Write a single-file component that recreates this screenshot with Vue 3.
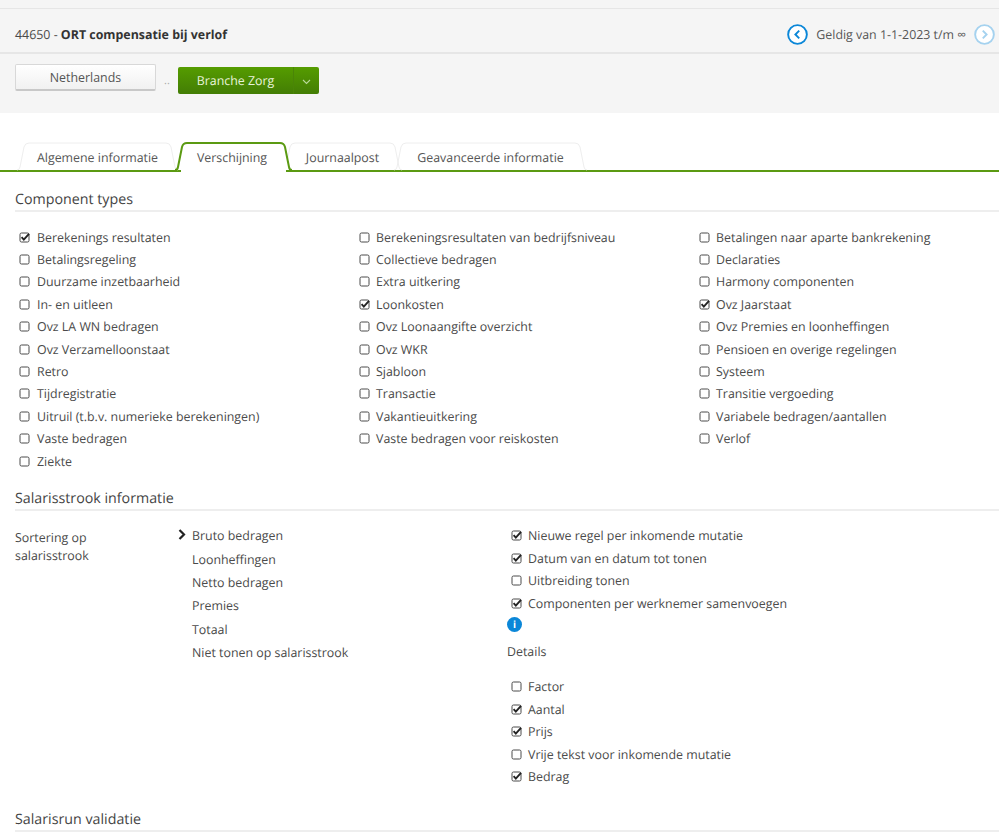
<script setup>
const tabs = [
  { label: 'Algemene informatie', width: 161, active: false, cls: 't1' },
  { label: 'Verschijning', width: 117, active: true, cls: 't2' },
  { label: 'Journaalpost', width: 119, active: false, cls: 't3' },
  { label: 'Geavanceerde informatie', width: 193, active: false, cls: 't4' }
]
function tabPath(w) {
  return `M0 27 Q2.5 27 3 24 L7 4 Q8 0 12 0 L${w - 12} 0 Q${w - 8} 0 ${w - 7} 4 L${w - 3} 24 Q${w - 2.5} 27 ${w} 27`
}
const types = [
  ['Berekenings resultaten', 1], ['Berekeningsresultaten van bedrijfsniveau', 0], ['Betalingen naar aparte bankrekening', 0],
  ['Betalingsregeling', 0], ['Collectieve bedragen', 0], ['Declaraties', 0],
  ['Duurzame inzetbaarheid', 0], ['Extra uitkering', 0], ['Harmony componenten', 0],
  ['In- en uitleen', 0], ['Loonkosten', 1], ['Ovz Jaarstaat', 1],
  ['Ovz LA WN bedragen', 0], ['Ovz Loonaangifte overzicht', 0], ['Ovz Premies en loonheffingen', 0],
  ['Ovz Verzamelloonstaat', 0], ['Ovz WKR', 0], ['Pensioen en overige regelingen', 0],
  ['Retro', 0], ['Sjabloon', 0], ['Systeem', 0],
  ['Tijdregistratie', 0], ['Transactie', 0], ['Transitie vergoeding', 0],
  ['Uitruil (t.b.v. numerieke berekeningen)', 0], ['Vakantieuitkering', 0], ['Variabele bedragen/aantallen', 0],
  ['Vaste bedragen', 0], ['Vaste bedragen voor reiskosten', 0], ['Verlof', 0],
  ['Ziekte', 0]
]
const sort = ['Bruto bedragen', 'Loonheffingen', 'Netto bedragen', 'Premies', 'Totaal', 'Niet tonen op salarisstrook']
const opts = [['Nieuwe regel per inkomende mutatie', 1], ['Datum van en datum tot tonen', 1], ['Uitbreiding tonen', 0], ['Componenten per werknemer samenvoegen', 1]]
const details = [['Factor', 0], ['Aantal', 1], ['Prijs', 1], ['Vrije tekst voor inkomende mutatie', 0], ['Bedrag', 1]]
</script>

<template>
  <div class="page">
    <header class="head">
      <div class="titlebar">
        <div class="title">44650 - <b>ORT compensatie bij verlof</b></div>
        <div class="valid">
          <svg class="nav" viewBox="0 0 22 22"><circle cx="11" cy="11" r="9.8" fill="#fff" stroke="#0b87d8" stroke-width="2"/><path d="M12.8 7 L8.8 11 L12.8 15" fill="none" stroke="#0b87d8" stroke-width="2"/></svg>
          <span>Geldig van 1-1-2023 t/m ∞</span>
          <svg class="nav" viewBox="0 0 22 22"><circle cx="11" cy="11" r="9.8" fill="#fff" stroke="#a5d2ef" stroke-width="2"/><path d="M9.2 7 L13.2 11 L9.2 15" fill="none" stroke="#a5d2ef" stroke-width="2"/></svg>
        </div>
      </div>
      <div class="btns">
        <button class="btn-white">Netherlands</button>
        <span class="dots">..</span>
        <div class="btn-green"><span class="gmain">Branche Zorg</span><span class="garrow"><svg width="9" height="6" viewBox="0 0 9 6"><path d="M1 1 L4.5 4.5 L8 1" fill="none" stroke="#b9d99a" stroke-width="1.1"/></svg></span></div>
      </div>
    </header>

    <nav class="tabs">
      <div v-for="t in tabs" :key="t.label" class="tab" :class="[t.cls, { active: t.active }]" :style="{ width: t.width + 'px' }">
        <svg class="tabshape" :width="t.width" height="30" :viewBox="`0 0 ${t.width} 30`">
          <rect v-if="t.active" x="6" y="24" :width="t.width - 12" height="6" fill="#fff"/>
          <path :d="tabPath(t.width)" :fill="t.active ? '#fff' : 'none'" :stroke="t.active ? '#5b9a12' : '#eeeeee'" :stroke-width="t.active ? 2 : 1"/>
        </svg>
        <span class="tablabel">{{ t.label }}</span>
      </div>
    </nav>

    <main class="content">
      <h2 class="sec first">Component types</h2>
      <div class="grid">
        <label v-for="t in types" :key="t[0]" class="chk">
          <svg class="box" viewBox="0 0 11 11"><rect x="1" y="1" width="9" height="9" rx="1.5" fill="#fff" stroke="#4a4a4a" stroke-width="1"/><path v-if="t[1]" d="M2.6 5.2 L4.8 7.6 L10 1.8" fill="none" stroke="#222" stroke-width="1.9"/></svg>
          <span>{{ t[0] }}</span>
        </label>
      </div>

      <h2 class="sec second">Salarisstrook informatie</h2>
      <div class="sal">
        <div class="sal-label">Sortering op<br>salarisstrook</div>
        <ul class="sort">
          <li v-for="(s, i) in sort" :key="s">
            <svg v-if="i === 0" class="chev" viewBox="0 0 8 11"><path d="M1.5 1 L6 5.5 L1.5 10" fill="none" stroke="#222" stroke-width="2.2"/></svg>
            {{ s }}
          </li>
        </ul>
        <div class="sal-right">
          <label v-for="t in opts" :key="t[0]" class="chk opt">
            <svg class="box" viewBox="0 0 11 11"><rect x="1" y="1" width="9" height="9" rx="1.5" fill="#fff" stroke="#4a4a4a" stroke-width="1"/><path v-if="t[1]" d="M2.6 5.2 L4.8 7.6 L10 1.8" fill="none" stroke="#222" stroke-width="1.9"/></svg>
            <span>{{ t[0] }}</span>
          </label>
          <div class="info">i</div>
          <div class="details">Details</div>
          <label v-for="t in details" :key="t[0]" class="chk opt">
            <svg class="box" viewBox="0 0 11 11"><rect x="1" y="1" width="9" height="9" rx="1.5" fill="#fff" stroke="#4a4a4a" stroke-width="1"/><path v-if="t[1]" d="M2.6 5.2 L4.8 7.6 L10 1.8" fill="none" stroke="#222" stroke-width="1.9"/></svg>
            <span>{{ t[0] }}</span>
          </label>
        </div>
      </div>

      <h2 class="sec third">Salarisrun validatie</h2>
    </main>
  </div>
</template>

<style>
html, body { margin: 0; background: #fff; }
</style>

<style scoped>
.page { width: 999px; height: 836px; overflow: hidden; font-family: "Open Sans", sans-serif; font-size: 12.4px; color: #4a4a4a; background: #fff; text-rendering: geometricPrecision; }
.head { height: 113px; background: #f5f5f5; padding-top: 8px; box-sizing: border-box; }
.titlebar { border-top: 1px solid #e6e6e6; border-bottom: 2px solid #e6e6e6; display: flex; justify-content: space-between; align-items: center; padding: 7px 4px 0 15px; box-sizing: border-box; height: 46px; }
.title b { font-weight: 700; color: #333; }
.valid { display: flex; align-items: center; gap: 8px; color: #555; }
.nav { width: 21px; height: 21px; }
.btns { display: flex; align-items: flex-start; padding: 10px 0 0 15px; }
.btn-white { width: 141px; height: 27px; background: linear-gradient(#fff, #f1f1f1); border: 1px solid #d8d8d8; border-bottom: 2px solid #c8c8c8; border-radius: 2px; font: inherit; color: #555; padding: 0; }
.dots { width: 22px; text-align: center; color: #aaa; font-size: 11px; margin-top: 9px; }
.btn-green { display: flex; width: 141px; height: 27px; margin-top: 3px; background: linear-gradient(#559c00, #437d05); border-radius: 2px; color: #e8f3da; line-height: 27px; }
.gmain { width: 115px; text-align: center; }
.garrow { width: 26px; border-left: 1px solid #4a8507; display: flex; align-items: center; justify-content: center; padding-top: 3px; box-sizing: border-box; }
.tabs { display: flex; margin-top: 30px; padding-left: 17px; border-bottom: 2px solid #5b9a12; height: 27px; }
.tab { position: relative; height: 28px; text-align: center; line-height: 29px; color: #555; }
.tab.t2 { margin-left: -3px; z-index: 1; padding-right: 3px; box-sizing: border-box; }
.tab.t3 { margin-left: -9px; }
.tab.t4 { margin-left: -8px; }
.tabshape { position: absolute; left: 0; top: 0; overflow: visible; }
.tablabel { position: relative; }
.content { padding: 0 0 0 15px; }
.sec { margin: 0; font-weight: 400; font-size: 14.25px; color: #444; border-bottom: 2px solid #eee; line-height: 20px; }
.sec.first { margin-top: 18px; }
.grid { display: grid; grid-template-columns: repeat(3, 340px); grid-auto-rows: 22.4px; padding: 14px 0 0 4px; }
.chk { display: flex; align-items: center; gap: 6px; white-space: nowrap; }
.grid .chk:nth-child(3n+1) { gap: 7px; }
.box { width: 11px; height: 11px; flex: none; }
.sec.second { margin-top: 17px; }
.sal { display: flex; position: relative; }
.sal-label { width: 177px; padding-top: 18px; line-height: 18px; }
.sort { list-style: none; margin: 0; padding: 13.1px 0 0 0; width: 315px; }
.sort li { position: relative; height: 23.3px; line-height: 23.3px; }
.chev { position: absolute; left: -14px; top: 5px; width: 8px; height: 11px; }
.sal-right { padding-top: 13.3px; }
.opt { height: 22.5px; padding-left: 4px; gap: 6px; }
.info { width: 15px; height: 15px; border-radius: 50%; background: #0b87d8; color: #fff; font-size: 10px; font-weight: 700; text-align: center; line-height: 15px; margin-top: 2.7px; }
.details { height: 27px; line-height: 27px; margin-top: 6px; margin-bottom: 10px; }
.sec.third { margin-top: 22px; }
</style>
